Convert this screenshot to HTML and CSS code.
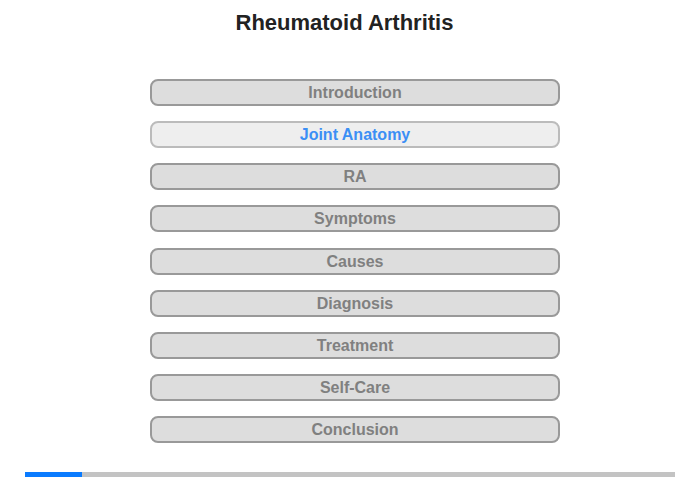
FILE: index.html
```html
<!DOCTYPE html>
<html>
<head>
<meta charset="utf-8">
<link rel="stylesheet" href="styles.css">
</head>
<body>
<div class="page">
  <h1 class="title">Rheumatoid Arthritis</h1>
  <nav class="menu">
    <div class="item">Introduction</div>
    <div class="item active">Joint Anatomy</div>
    <div class="item">RA</div>
    <div class="item">Symptoms</div>
    <div class="item">Causes</div>
    <div class="item">Diagnosis</div>
    <div class="item">Treatment</div>
    <div class="item">Self-Care</div>
    <div class="item">Conclusion</div>
  </nav>
  <div class="progress"><div class="fill" style="width:57px"></div></div>
</div>
</body>
</html>
```
FILE: styles.css
```css
html, body {
  margin: 0;
  padding: 0;
  background: #fff;
}
.page {
  width: 700px;
  height: 480px;
  font-family: "Liberation Sans", Arial, sans-serif;
  display: flex;
  flex-direction: column;
}
.title {
  margin: 10px 0 0 0;
  padding-right: 11px;
  font-size: 22px;
  line-height: 26px;
  font-weight: bold;
  color: #222;
  text-align: center;
}
.menu {
  margin: 43px 0 0 150px;
  width: 410px;
  display: flex;
  flex-direction: column;
  gap: 15.125px;
}
.item {
  box-sizing: border-box;
  height: 27px;
  border: 2px solid #999;
  border-radius: 8px;
  background: #ddd;
  color: #808080;
  font-size: 16px;
  font-weight: bold;
  line-height: 23px;
  text-align: center;
}
.item.active {
  background: #eee;
  border-color: #bbb;
  color: #3b8ff5;
}
.progress {
  margin: 29px 0 0 25px;
  width: 650px;
  height: 5px;
  background: #c3c3c3;
}
.fill {
  height: 5px;
  background: #0a7bff;
}
```
